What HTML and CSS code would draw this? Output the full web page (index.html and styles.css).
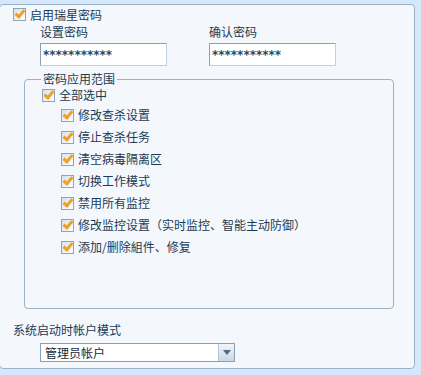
FILE: index.html
```html
<!DOCTYPE html>
<html lang="zh-CN">
<head>
  <meta charset="UTF-8" />
  <title>密码设置</title>
  <link rel="stylesheet" href="styles.css">
</head>
<body>
  <div class="panel">
    <label class="check-row main-row">
      <span class="cb"></span>
      <span>启用瑞星密码</span>
    </label>

    <div class="fields">
      <div class="field">
        <div class="field-label">设置密码</div>
        <div class="input">***********</div>
      </div>
      <div class="field">
        <div class="field-label">确认密码</div>
        <div class="input">***********</div>
      </div>
    </div>

    <fieldset class="group">
      <legend>密码应用范围</legend>
      <label class="check-row all-row">
        <span class="cb"></span>
        <span>全部选中</span>
      </label>
      <div class="sub-list">
        <label class="check-row sub-row"><span class="cb"></span><span>修改查杀设置</span></label>
        <label class="check-row sub-row"><span class="cb"></span><span>停止查杀任务</span></label>
        <label class="check-row sub-row"><span class="cb"></span><span>清空病毒隔离区</span></label>
        <label class="check-row sub-row"><span class="cb"></span><span>切换工作模式</span></label>
        <label class="check-row sub-row"><span class="cb"></span><span>禁用所有监控</span></label>
        <label class="check-row sub-row"><span class="cb"></span><span>修改监控设置（实时监控、智能主动防御）</span></label>
        <label class="check-row sub-row"><span class="cb"></span><span>添加/删除組件、修复</span></label>
      </div>
    </fieldset>

    <div class="mode-label">系统启动时帐户模式</div>
    <div class="select">
      <span class="select-text">管理员帐户</span>
      <span class="select-btn"><span class="arrow"></span></span>
    </div>
  </div>
</body>
</html>
```

FILE: styles.css
```css
body {
  margin: 0;
  padding: 4px 6px 0 0;
  background-color: #d5e7fb;
  font-family: "Noto Sans CJK SC", sans-serif;
  font-size: 12px;
  color: #1d3a52;
}

.panel {
  box-sizing: border-box;
  height: 365px;
  margin-left: -1px;
  border: 1px solid #9bb1c6;
  border-radius: 4px;
  background-color: #f4f8fd;
}

/* checkbox rows */
.check-row {
  display: flex;
  align-items: center;
  gap: 4px;
  line-height: 12px;
  white-space: nowrap;
}

.cb {
  position: relative;
  box-sizing: border-box;
  width: 13px;
  height: 13px;
  flex: none;
  border: 1px solid #8ea4b9;
  background: linear-gradient(135deg, #d6e1ec, #ffffff);
}

.cb::after {
  content: "";
  position: absolute;
  left: 1px;
  top: 1px;
  width: 7px;
  height: 3px;
  border-left: 3px solid #f0a024;
  border-bottom: 3px solid #f0a024;
  transform: rotate(-50deg);
}

.main-row {
  height: 13px;
  margin-top: 3px;
  padding-left: 13px;
}

/* password fields */
.fields {
  display: flex;
  margin-top: 5px;
  padding-left: 40px;
}

.field {
  width: 169px;
}

.field-label {
  height: 12px;
  line-height: 12px;
}

.input {
  box-sizing: border-box;
  width: 127px;
  height: 23px;
  margin-top: 5px;
  padding-left: 2px;
  border: 1px solid;
  border-color: #8aa0b4 #c3d1dd #c3d1dd #8aa0b4;
  background: #fff;
  font-family: "DejaVu Sans", sans-serif;
  font-size: 12px;
  font-weight: bold;
  line-height: 22px;
  color: #1f4a64;
}

/* scope group */
.group {
  box-sizing: border-box;
  width: 370px;
  height: 236px;
  margin: 7px 0 0 24px;
  padding: 1px 0 0 17px;
  border: 1px solid #9bb1c6;
  border-radius: 4px;
}

.group legend {
  margin-left: -1px;
  padding: 0 2px;
  line-height: 12px;
}

.all-row {
  height: 18px;
}

.sub-list {
  padding-left: 19px;
}

.sub-row {
  height: 22px;
}

/* account mode */
.mode-label {
  margin-top: 15px;
  padding-left: 13px;
  line-height: 12px;
}

.select {
  box-sizing: border-box;
  display: flex;
  width: 195px;
  height: 19px;
  margin: 7px 0 0 40px;
  border: 1px solid #8aa0b4;
  background: #fff;
}

.select-text {
  flex: 1;
  padding-left: 4px;
  line-height: 17px;
  color: #15283a;
}

.select-btn {
  display: flex;
  align-items: center;
  justify-content: center;
  width: 15px;
  border-left: 1px solid #b5c4d2;
  background: linear-gradient(#f2f6fa, #c9d7e4);
}

.arrow {
  width: 0;
  height: 0;
  border-left: 4px solid transparent;
  border-right: 4px solid transparent;
  border-top: 5px solid #4b6a86;
}
```
